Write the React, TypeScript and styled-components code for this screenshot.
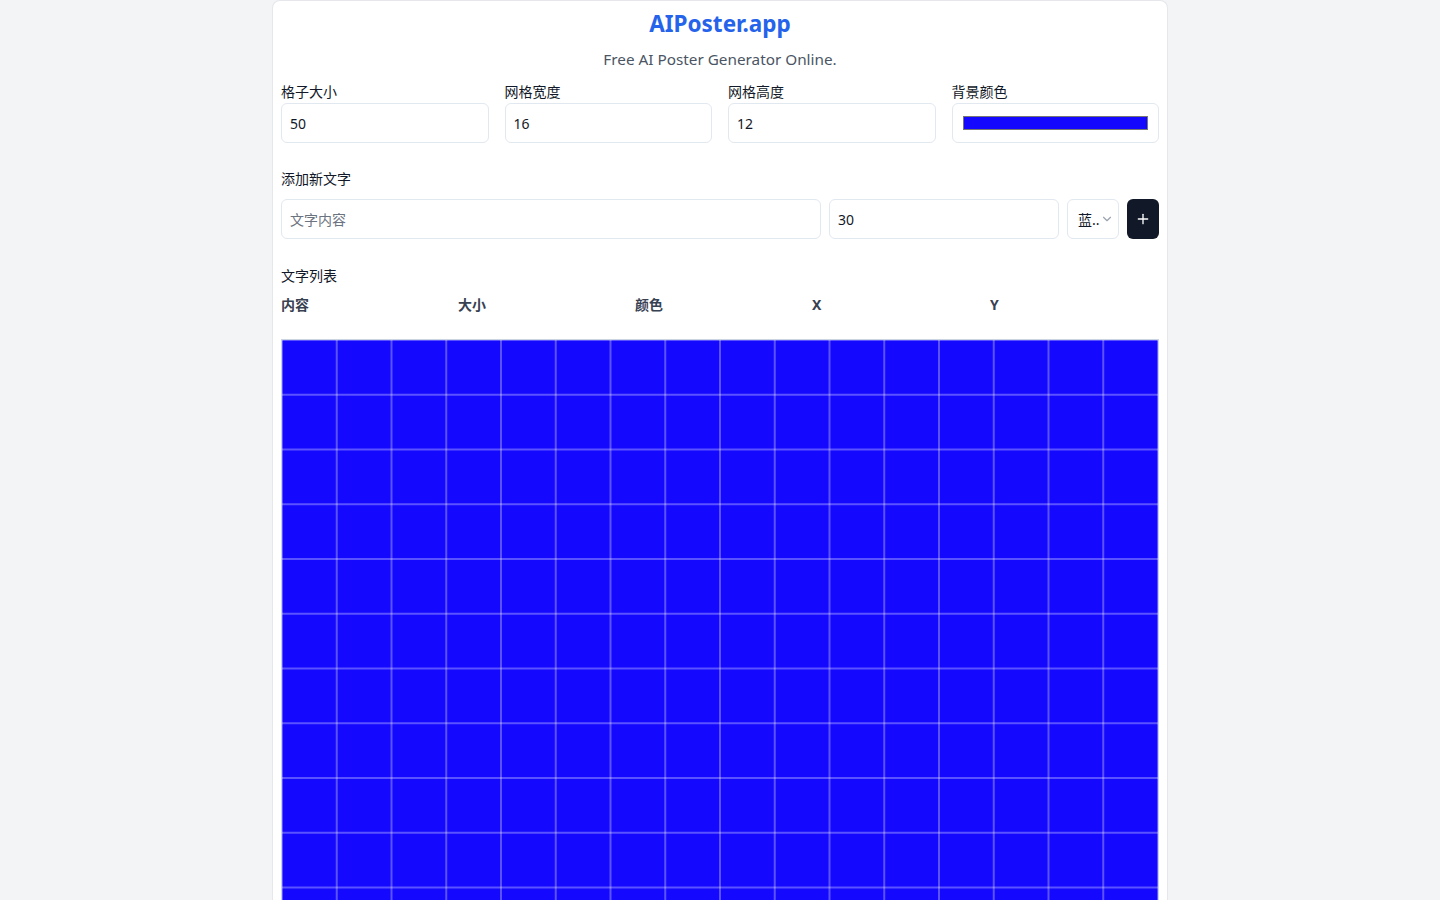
import React from "react";
import styled, { createGlobalStyle } from "styled-components";

const Global = createGlobalStyle`
  html, body { margin: 0; padding: 0; background: #f3f4f6; }
  body { font-family: "Noto Sans", "Noto Sans CJK SC", sans-serif; color: #111827; }
  * { box-sizing: border-box; }
`;

const Page = styled.div`
  min-height: 100vh;
  display: flex;
  justify-content: center;
`;

const Card = styled.main`
  width: 896px;
  background: #ffffff;
  border: 1px solid #e5e7eb;
  border-bottom: none;
  border-radius: 8px 8px 0 0;
  padding: 8px 8px 24px;
  display: flex;
  flex-direction: column;
`;

const Title = styled.h1`
  margin: 0;
  text-align: center;
  font-size: 22.5px;
  line-height: 30px;
  font-weight: 700;
  color: #2563eb;
`;

const Subtitle = styled.p`
  margin: 8px 0 0;
  text-align: center;
  font-size: 15.3px;
  line-height: 24px;
  color: #4b5563;
`;

const SettingsGrid = styled.div`
  display: grid;
  grid-template-columns: repeat(4, 1fr);
  gap: 16px;
  margin-top: 11px;
`;

const Field = styled.label`
  display: flex;
  flex-direction: column;
`;

const Label = styled.span`
  font-size: 14px;
  line-height: 20px;
  color: #111827;
  margin-bottom: 1px;
`;

const Input = styled.input`
  height: 40px;
  width: 100%;
  border: 1px solid #e2e8f0;
  border-radius: 6px;
  padding: 0 8px;
  font-family: inherit;
  font-size: 14px;
  color: #111827;
  background: #fff;
  outline: none;
  &::placeholder { color: #6b7280; }
`;

const ColorBox = styled.div`
  height: 40px;
  border: 1px solid #e2e8f0;
  border-radius: 6px;
  display: flex;
  align-items: center;
  padding: 0 10px;
`;

const Swatch = styled.div<{ $color: string }>`
  flex: 1;
  height: 14px;
  background: ${(p) => p.$color};
  border: 1px solid #767676;
`;

const Section = styled.section<{ $top: number }>`
  margin-top: ${(p) => p.$top}px;
  display: flex;
  flex-direction: column;
`;

const SectionLabel = styled.div<{ $gap: number }>`
  font-size: 14px;
  line-height: 20px;
  color: #111827;
  margin-bottom: ${(p) => p.$gap}px;
`;

const AddRow = styled.div`
  display: flex;
  gap: 8px;
  align-items: center;
`;

const TextInput = styled(Input)`
  flex: 0 0 540px;
`;

const NumberInput = styled(Input)`
  flex: 1;
`;

const Select = styled.div`
  width: 52px;
  height: 40px;
  border: 1px solid #e2e8f0;
  border-radius: 6px;
  display: flex;
  align-items: center;
  padding: 0 0 0 10px;
  font-size: 14px;
  color: #111827;
  flex: none;
`;

const SelectText = styled.span`
  white-space: nowrap;
`;

const AddButton = styled.button`
  width: 32px;
  height: 40px;
  flex: none;
  border: none;
  border-radius: 6px;
  background: #111827;
  color: #fff;
  display: flex;
  align-items: center;
  justify-content: center;
  padding: 0;
`;

const TableHead = styled.div`
  display: grid;
  grid-template-columns: 177px 177px 177px 178px 1fr;
  height: 32px;
  align-items: start;
`;

const Th = styled.div`
  font-size: 14px;
  line-height: 20px;
  font-weight: 700;
  color: #374151;
  padding-top: 1px;
`;

const Canvas = styled.div<{ $bg: string; $cols: number; $rows: number }>`
  margin-top: 13px;
  width: 100%;
  aspect-ratio: ${(p) => p.$cols} / ${(p) => p.$rows};
  border: 1px solid #cbd5e1;
  background-color: ${(p) => p.$bg};
  background-image:
    linear-gradient(to right, rgba(255, 255, 255, 0.3) 1.5px, transparent 1.5px),
    linear-gradient(to bottom, rgba(255, 255, 255, 0.3) 1.5px, transparent 1.5px);
  background-size: calc(100% / ${(p) => p.$cols}) calc(100% / ${(p) => p.$rows});
  background-position: -1px -1px;
`;

export default function App() {
  const bg = "#1408ff";
  return (
    <Page>
      <Global />
      <Card>
        <Title>AIPoster.app</Title>
        <Subtitle>Free AI Poster Generator Online.</Subtitle>
        <SettingsGrid>
          <Field>
            <Label>格子大小</Label>
            <Input type="text" defaultValue="50" />
          </Field>
          <Field>
            <Label>网格宽度</Label>
            <Input type="text" defaultValue="16" />
          </Field>
          <Field>
            <Label>网格高度</Label>
            <Input type="text" defaultValue="12" />
          </Field>
          <Field>
            <Label>背景颜色</Label>
            <ColorBox>
              <Swatch $color={bg} />
            </ColorBox>
          </Field>
        </SettingsGrid>

        <Section $top={26}>
          <SectionLabel $gap={10}>添加新文字</SectionLabel>
          <AddRow>
            <TextInput type="text" placeholder="文字内容" />
            <NumberInput type="text" defaultValue="30" />
            <Select>
              <SelectText>蓝..</SelectText>
              <svg width="14" height="14" viewBox="0 0 24 24" fill="none" stroke="#9ca3af" strokeWidth="2" strokeLinecap="round" strokeLinejoin="round">
                <path d="m6 9 6 6 6-6" />
              </svg>
            </Select>
            <AddButton aria-label="添加">
              <svg width="16" height="16" viewBox="0 0 24 24" fill="none" stroke="#fff" strokeWidth="2" strokeLinecap="round" strokeLinejoin="round">
                <path d="M5 12h14" />
                <path d="M12 5v14" />
              </svg>
            </AddButton>
          </AddRow>
        </Section>

        <Section $top={27}>
          <SectionLabel $gap={8}>文字列表</SectionLabel>
          <TableHead>
            <Th>内容</Th>
            <Th>大小</Th>
            <Th>颜色</Th>
            <Th>X</Th>
            <Th>Y</Th>
          </TableHead>
          <Canvas $bg={bg} $cols={16} $rows={12} />
        </Section>
      </Card>
    </Page>
  );
}
